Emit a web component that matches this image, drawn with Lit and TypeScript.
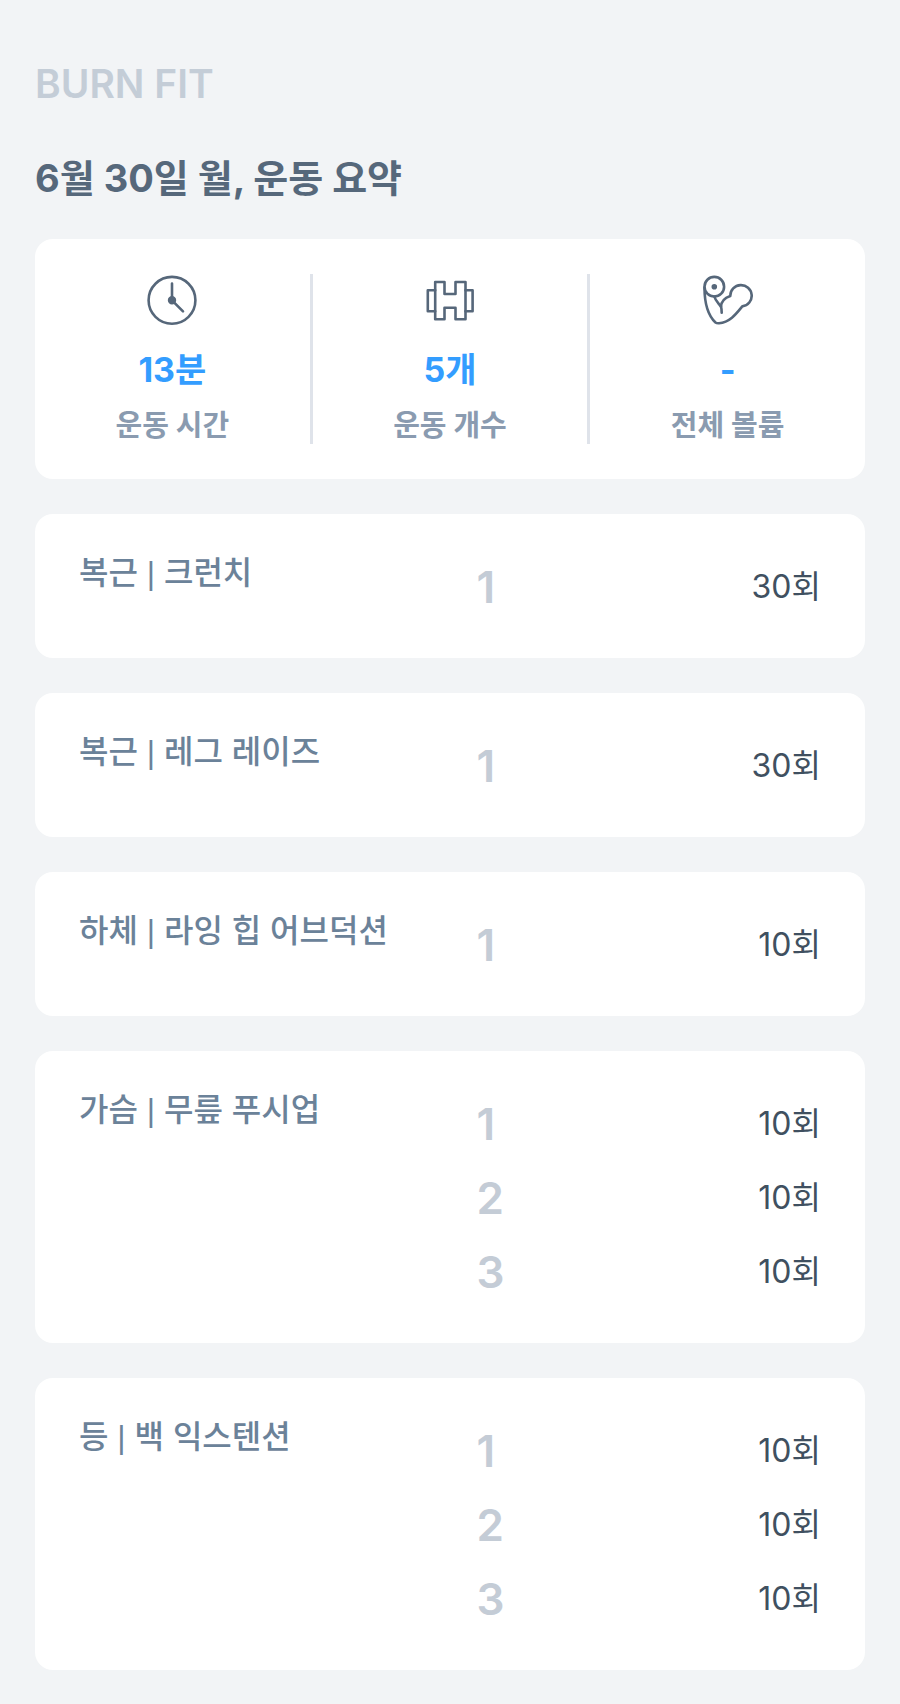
import { LitElement, html, css, svg } from "lit";
import { customElement, property } from "lit/decorators.js";

interface Exercise {
  part: string;
  name: string;
  sets: number[];
}

const EXERCISES: Exercise[] = [
  { part: "복근", name: "크런치", sets: [30] },
  { part: "복근", name: "레그 레이즈", sets: [30] },
  { part: "하체", name: "라잉 힙 어브덕션", sets: [10] },
  { part: "가슴", name: "무릎 푸시업", sets: [10, 10, 10] },
  { part: "등", name: "백 익스텐션", sets: [10, 10, 10] },
];

const clockIcon = svg`
  <circle cx="25" cy="25.3" r="23.4" />
  <path d="M25 25.3V8.5M25 25.3L36 36.3" />
  <circle cx="25" cy="25.3" r="2.9" fill="currentColor" />`;

const dumbbellIcon = svg`
  <path d="M10.2 7H19.5V19H30.5V7H40.5V44.3H30.5V32.7H19.5V44.3H10.2Z" />
  <path d="M10.2 15.3H2.8V36.2H10.2M40.5 15.3H47.6V36.2H40.5" />`;

const armIcon = svg`
  <circle cx="11.3" cy="11.7" r="9.8" />
  <circle cx="11.3" cy="11.7" r="1.5" fill="currentColor" />
  <path d="M1.5 12.5C1.5 28 4.5 40 12.5 47.5C13.5 48.3 14.5 48.4 16 48.3C27 47.3 33.5 38.5 39.3 31.4A10.7 10.7 0 1 0 27.3 20.9C22.5 22.5 18.2 26 18 31.7" />
  <path d="M11.3 21.5C12.5 26 16 28.5 18 31.7C18.6 33.5 18.7 35.5 18.7 37.7" />`;

@customElement("summary-stat")
class SummaryStat extends LitElement {
  @property({ attribute: false }) icon: unknown;
  @property() value = "";
  @property() label = "";

  static styles = css`
    :host {
      display: flex;
      flex-direction: column;
      align-items: center;
    }
    .icon {
      width: 50px;
      height: 50px;
      margin-top: 1px;
      color: #56677a;
      fill: none;
      stroke: currentColor;
      stroke-width: 2.6;
      stroke-linecap: round;
      stroke-linejoin: round;
    }
    .value {
      margin-top: 22px;
      font-size: 34px;
      line-height: 46px;
      font-weight: 700;
      color: #339dff;
    }
    .label {
      margin-top: 15px;
      font-size: 29px;
      line-height: 36px;
      font-weight: 700;
      color: #8a9bb0;
    }
  `;

  render() {
    return html`
      <svg class="icon" viewBox="0 0 50 50" aria-hidden="true">${this.icon}</svg>
      <span class="value">${this.value}</span>
      <span class="label">${this.label}</span>
    `;
  }
}

@customElement("exercise-card")
class ExerciseCard extends LitElement {
  @property({ attribute: false }) exercise!: Exercise;

  static styles = css`
    :host {
      display: block;
    }
    .card {
      display: grid;
      grid-template-columns: 8fr 7fr;
      column-gap: 4px;
      padding: 36px 44px 34px;
      border-radius: 18px;
      background: #fff;
    }
    .title {
      margin: 0;
      font-family: "Liberation Sans", "Noto Sans CJK KR", sans-serif;
      font-size: 32px;
      line-height: 46px;
      font-weight: 500;
      color: #6b8299;
    }
    .sets {
      margin: 0;
      padding: 0;
      list-style: none;
    }
    .set {
      display: flex;
      align-items: center;
      justify-content: space-between;
      height: 74px;
      line-height: 74px;
    }
    .number {
      font-size: 44px;
      font-weight: 600;
      color: #c4ccd6;
    }
    .reps {
      font-size: 32px;
      color: #405060;
    }
  `;

  render() {
    const { part, name, sets } = this.exercise;
    return html`
      <article class="card">
        <h2 class="title">${part} | ${name}</h2>
        <ol class="sets">
          ${sets.map(
            (reps, i) => html`<li class="set">
              <span class="number">${i + 1}</span>
              <span class="reps">${reps}회</span>
            </li>`
          )}
        </ol>
      </article>
    `;
  }
}

@customElement("app-root")
class AppRoot extends LitElement {
  static styles = css`
    :host {
      display: block;
      box-sizing: border-box;
      min-height: 100vh;
      padding: 60px 35px 34px;
      background: #f2f4f6;
      font-family: Inter, "Noto Sans CJK KR", sans-serif;
    }
    .brand {
      font-size: 39px;
      line-height: 48px;
      font-weight: 600;
      color: #c4cdd7;
    }
    .date {
      margin: 42px 0 33px;
      font-size: 38px;
      line-height: 56px;
      font-weight: 700;
      color: #56687b;
    }
    .list {
      display: flex;
      flex-direction: column;
      gap: 35px;
    }
    .summary {
      display: grid;
      grid-template-columns: repeat(3, 1fr);
      column-gap: 3px;
      padding: 35px 0;
      border-radius: 18px;
      background: #fff;
    }
    .stat + .stat {
      box-shadow: -3px 0 0 #dfe3ea;
    }
  `;

  render() {
    return html`
      <header>
        <div class="brand">BURN FIT</div>
        <h1 class="date">6월 30일 월, 운동 요약</h1>
      </header>
      <main class="list">
        <section class="summary">
          <summary-stat class="stat" .icon=${clockIcon} value="13분" label="운동 시간"></summary-stat>
          <summary-stat class="stat" .icon=${dumbbellIcon} value="5개" label="운동 개수"></summary-stat>
          <summary-stat class="stat" .icon=${armIcon} value="-" label="전체 볼륨"></summary-stat>
        </section>
        ${EXERCISES.map((e) => html`<exercise-card .exercise=${e}></exercise-card>`)}
      </main>
    `;
  }
}
